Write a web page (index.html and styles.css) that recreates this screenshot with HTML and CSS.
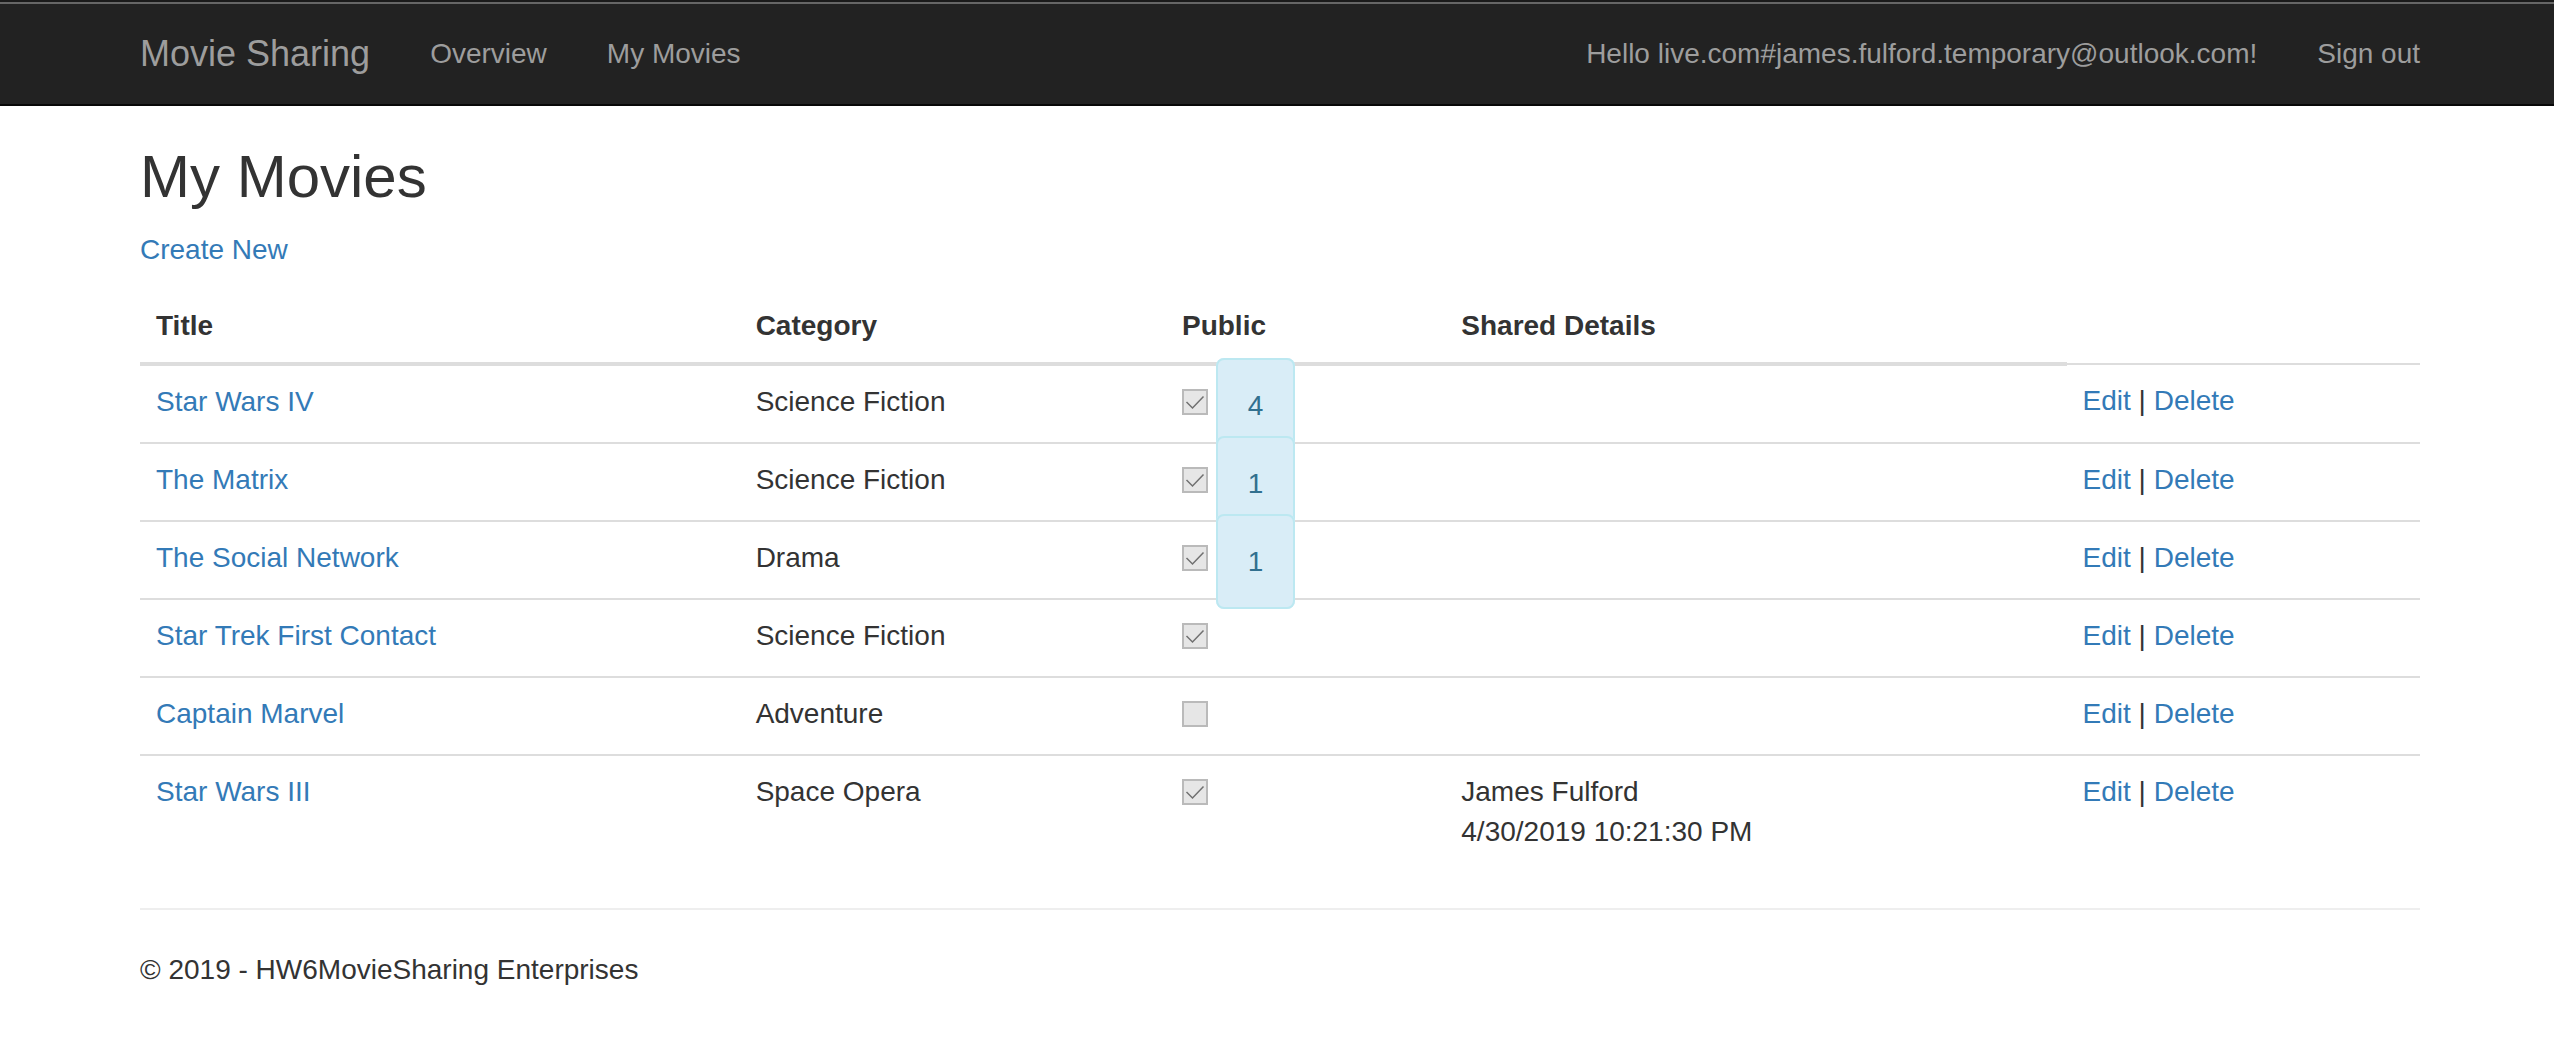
FILE: index.html
```html
<!DOCTYPE html>
<html lang="en">
<head>
  <meta charset="utf-8">
  <meta name="viewport" content="width=device-width, initial-scale=1">
  <title>My Movies - Movie Sharing</title>
  <link rel="stylesheet" href="styles.css">
</head>
<body>
  <header class="navbar">
    <nav class="container navbar-inner">
      <a class="navbar-brand" href="#">Movie Sharing</a>
      <ul class="nav">
        <li><a href="#">Overview</a></li>
        <li><a href="#">My Movies</a></li>
      </ul>
      <ul class="nav nav-right">
        <li><a href="#">Hello live.com#james.fulford.temporary@outlook.com!</a></li>
        <li><a href="#">Sign out</a></li>
      </ul>
    </nav>
  </header>

  <div class="container">
    <main>
      <h2>My Movies</h2>
      <p><a href="#">Create New</a></p>
      <table class="table">
        <colgroup>
          <col class="col-title">
          <col class="col-category">
          <col class="col-public">
          <col class="col-shared">
          <col>
        </colgroup>
        <thead>
          <tr>
            <th>Title</th>
            <th>Category</th>
            <th>Public</th>
            <th>Shared Details</th>
          </tr>
        </thead>
        <tbody>
          <tr>
            <td><a href="#">Star Wars IV</a></td>
            <td>Science Fiction</td>
            <td><input class="check" type="checkbox" aria-label="Star Wars IV is public" checked disabled> <span class="alert">4</span></td>
            <td></td>
            <td><a href="#">Edit</a> | <a href="#">Delete</a></td>
          </tr>
          <tr>
            <td><a href="#">The Matrix</a></td>
            <td>Science Fiction</td>
            <td><input class="check" type="checkbox" aria-label="The Matrix is public" checked disabled> <span class="alert">1</span></td>
            <td></td>
            <td><a href="#">Edit</a> | <a href="#">Delete</a></td>
          </tr>
          <tr>
            <td><a href="#">The Social Network</a></td>
            <td>Drama</td>
            <td><input class="check" type="checkbox" aria-label="The Social Network is public" checked disabled> <span class="alert">1</span></td>
            <td></td>
            <td><a href="#">Edit</a> | <a href="#">Delete</a></td>
          </tr>
          <tr>
            <td><a href="#">Star Trek First Contact</a></td>
            <td>Science Fiction</td>
            <td><input class="check" type="checkbox" aria-label="Star Trek First Contact is public" checked disabled></td>
            <td></td>
            <td><a href="#">Edit</a> | <a href="#">Delete</a></td>
          </tr>
          <tr>
            <td><a href="#">Captain Marvel</a></td>
            <td>Adventure</td>
            <td><input class="check" type="checkbox" aria-label="Captain Marvel is public" disabled></td>
            <td></td>
            <td><a href="#">Edit</a> | <a href="#">Delete</a></td>
          </tr>
          <tr>
            <td><a href="#">Star Wars III</a></td>
            <td>Space Opera</td>
            <td><input class="check" type="checkbox" aria-label="Star Wars III is public" checked disabled></td>
            <td>James Fulford<br>4/30/2019 10:21:30 PM</td>
            <td><a href="#">Edit</a> | <a href="#">Delete</a></td>
          </tr>
        </tbody>
      </table>
    </main>
    <hr>
    <footer>
      <p>© 2019 - HW6MovieSharing Enterprises</p>
    </footer>
  </div>
</body>
</html>
```

FILE: styles.css
```css
* {
  box-sizing: border-box;
}

body {
  margin: 0;
  border-top: 2px solid #1a1a1a;
  background: #fff;
  color: #333;
  font: 28px/40px "Liberation Sans", Arial, Helvetica, sans-serif;
}

a {
  color: #337ab7;
  text-decoration: none;
}

p {
  margin: 0 0 20px;
}

h2 {
  margin: 38px 0 20px;
  font-size: 60px;
  line-height: 66px;
  font-weight: 400;
}

hr {
  margin: 40px 0;
  border: 0;
  border-top: 2px solid #eee;
}

.container {
  width: 100%;
  max-width: 2346px;
  margin: 0 auto;
  padding: 0 30px 0 36px;
}

/* Navigation bar */
.navbar {
  border-top: 2px solid #666;
  border-bottom: 2px solid #080808;
  background: #222;
}

.navbar a {
  display: block;
  padding: 30px;
  color: #9d9d9d;
}

.navbar-inner {
  display: flex;
}

.navbar .navbar-brand {
  margin-left: -30px;
  font-size: 36px;
}

.nav {
  display: flex;
  margin: 0;
  padding: 0;
  list-style: none;
}

.nav-right {
  margin: 0 -30px 0 auto;
}

/* Movie list */
.table {
  width: 100%;
  table-layout: fixed;
  border-collapse: collapse;
}

.col-title {
  width: 26.3%;
}

.col-category {
  width: 18.7%;
}

.col-public {
  width: 12.25%;
}

.col-shared {
  width: 27.25%;
}

.table th,
.table td {
  padding: 16px;
  text-align: left;
  vertical-align: top;
}

.table th {
  border-bottom: 4px solid #ddd;
}

.table td {
  border-top: 2px solid #ddd;
}

.check {
  appearance: none;
  width: 26px;
  height: 26px;
  margin: 7px 0 0;
  border: 2px solid #bababa;
  background: #e6e6e6;
}

.check:checked {
  background: #e6e6e6 url("data:image/svg+xml,%3Csvg xmlns='http://www.w3.org/2000/svg' viewBox='0 0 22 22'%3E%3Cpath d='M2.5 11l6 6L19.500 5.500' fill='none' stroke='%23707070' stroke-width='1.500'/%3E%3C/svg%3E") center / 22px 22px no-repeat;
}

/* Share count */
.alert {
  padding: 30px;
  border: 2px solid #bce8f1;
  border-radius: 8px;
  background: #d9edf7;
  color: #31708f;
}
```
